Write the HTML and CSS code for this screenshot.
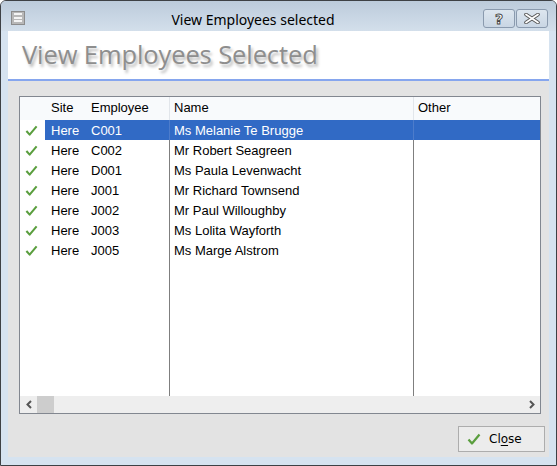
FILE: index.html
```html
<!DOCTYPE html>
<html>
<head>
<meta charset="utf-8">
<link rel="stylesheet" href="styles.css">
</head>
<body>
<div class="window">
  <div class="titlebar">
    <div class="sysicon"><span></span><span></span><span></span></div>
    <div class="title">View Employees selected</div>
    <div class="capbtns">
      <div class="capbtn help">?</div>
      <div class="capbtn close">
        <svg width="18" height="11" viewBox="0 0 18 11"><path d="M3 1.5 L15 9.5 M15 1.5 L3 9.5" stroke="#555" stroke-width="3.6" stroke-linecap="round"/><path d="M3 1.5 L15 9.5 M15 1.5 L3 9.5" stroke="#fff" stroke-width="1.8" stroke-linecap="round"/></svg>
      </div>
    </div>
  </div>
  <div class="frame">
    <div class="client">
      <div class="header"><h1>View Employees Selected</h1></div>
      <div class="panel">
        <div class="grid">
          <div class="row head">
            <div class="c chk"></div>
            <div class="c">Site</div>
            <div class="c">Employee</div>
            <div class="c line">Name</div>
            <div class="c line">Other</div>
          </div>
          <div class="body">
            <div class="row sel">
              <div class="c chk"><svg class="tick" viewBox="0 0 14 14"><path d="M1.5 7.5 L5 11.5 L12.5 2.5" fill="none" stroke="#5a9e3e" stroke-width="2.2" stroke-linejoin="round"/></svg></div>
              <div class="c">Here</div><div class="c">C001</div><div class="c line">Ms Melanie Te Brugge</div><div class="c line"></div>
            </div>
            <div class="row">
              <div class="c chk"><svg class="tick" viewBox="0 0 14 14"><path d="M1.5 7.5 L5 11.5 L12.5 2.5" fill="none" stroke="#5a9e3e" stroke-width="2.2" stroke-linejoin="round"/></svg></div>
              <div class="c">Here</div><div class="c">C002</div><div class="c line">Mr Robert Seagreen</div><div class="c line"></div>
            </div>
            <div class="row">
              <div class="c chk"><svg class="tick" viewBox="0 0 14 14"><path d="M1.5 7.5 L5 11.5 L12.5 2.5" fill="none" stroke="#5a9e3e" stroke-width="2.2" stroke-linejoin="round"/></svg></div>
              <div class="c">Here</div><div class="c">D001</div><div class="c line">Ms Paula Levenwacht</div><div class="c line"></div>
            </div>
            <div class="row">
              <div class="c chk"><svg class="tick" viewBox="0 0 14 14"><path d="M1.5 7.5 L5 11.5 L12.5 2.5" fill="none" stroke="#5a9e3e" stroke-width="2.2" stroke-linejoin="round"/></svg></div>
              <div class="c">Here</div><div class="c">J001</div><div class="c line">Mr Richard Townsend</div><div class="c line"></div>
            </div>
            <div class="row">
              <div class="c chk"><svg class="tick" viewBox="0 0 14 14"><path d="M1.5 7.5 L5 11.5 L12.5 2.5" fill="none" stroke="#5a9e3e" stroke-width="2.2" stroke-linejoin="round"/></svg></div>
              <div class="c">Here</div><div class="c">J002</div><div class="c line">Mr Paul Willoughby</div><div class="c line"></div>
            </div>
            <div class="row">
              <div class="c chk"><svg class="tick" viewBox="0 0 14 14"><path d="M1.5 7.5 L5 11.5 L12.5 2.5" fill="none" stroke="#5a9e3e" stroke-width="2.2" stroke-linejoin="round"/></svg></div>
              <div class="c">Here</div><div class="c">J003</div><div class="c line">Ms Lolita Wayforth</div><div class="c line"></div>
            </div>
            <div class="row">
              <div class="c chk"><svg class="tick" viewBox="0 0 14 14"><path d="M1.5 7.5 L5 11.5 L12.5 2.5" fill="none" stroke="#5a9e3e" stroke-width="2.2" stroke-linejoin="round"/></svg></div>
              <div class="c">Here</div><div class="c">J005</div><div class="c line">Ms Marge Alstrom</div><div class="c line"></div>
            </div>
            <div class="row filler">
              <div class="c chk"></div><div class="c"></div><div class="c"></div><div class="c line"></div><div class="c line"></div>
            </div>
          </div>
          <div class="hscroll">
            <div class="arrow"><svg width="8" height="9" viewBox="0 0 8 9"><path d="M6 1 L2.5 4.5 L6 8" fill="none" stroke="#555" stroke-width="2"/></svg></div>
            <div class="thumb"></div>
            <div class="track"></div>
            <div class="arrow"><svg width="8" height="9" viewBox="0 0 8 9"><path d="M2 1 L5.5 4.5 L2 8" fill="none" stroke="#555" stroke-width="2"/></svg></div>
          </div>
        </div>
        <div class="footer">
          <div class="btn">
            <svg class="btntick" viewBox="0 0 14 14"><path d="M1.5 7.5 L5 11.5 L12.5 2.5" fill="none" stroke="#5a9e3e" stroke-width="2.2" stroke-linejoin="round"/></svg>
            <span>Cl<u>o</u>se</span>
          </div>
        </div>
      </div>
    </div>
  </div>
</div>
</body>
</html>
```
FILE: styles.css
```css
html, body { margin: 0; padding: 0; background: #ffffff; }
.window {
  width: 557px; height: 466px; box-sizing: border-box;
  border: 1px solid #3e4145; border-radius: 6px 6px 0 0;
  background: #d6e3f0;
  display: flex; flex-direction: column;
  font-family: "Liberation Sans", Arial, sans-serif;
}
.titlebar {
  height: 30px; flex: none;
  background: linear-gradient(#bccbdb, #d3dfeb);
  border-radius: 5px 5px 0 0;
  display: flex; align-items: center;
  padding: 0 8px 0 10px;
}
.sysicon {
  width: 14px; height: 14px; box-sizing: border-box;
  border: 1px solid #8c8c8c; background: #b8b8b8;
  display: flex; flex-direction: column; justify-content: space-evenly; padding: 0 2px;
  margin-top: 3px;
}
.sysicon span { display: block; height: 2px; background: #f4f4f4; }
.title {
  flex: 1; text-align: center;
  font-family: "Noto Sans", "Open Sans", sans-serif; font-size: 14px; color: #000;
  padding-right: 2px; margin-top: 7px;
}
.capbtns { display: flex; gap: 1px; align-self: flex-start; margin-top: 8px; }
.capbtn {
  width: 32px; height: 19px; box-sizing: border-box;
  border: 1px solid #8a9aae; border-radius: 3px;
  background: linear-gradient(#dde6ef, #c9d6e4);
  display: flex; align-items: center; justify-content: center;
}
.capbtn.help {
  font-family: "DejaVu Sans", sans-serif; font-weight: bold; font-size: 14px;
  color: #fff; -webkit-text-stroke: 0.9px #444;
}
.frame { flex: 1; padding: 0 7px 8px 7px; display: flex; }
.client { flex: 1; display: flex; flex-direction: column; background: #e3e3e3; }
.header {
  height: 48px; background: #fff; border-bottom: 2px solid #86a6ee;
  display: flex; align-items: center; padding-left: 14px;
}
.header h1 {
  margin: 0; font-family: "Open Sans", "Noto Sans", sans-serif;
  font-weight: normal; font-size: 25.5px; color: #8e8e8e;
  text-shadow: 2px 3px 3px rgba(0,0,0,0.28);
  margin-top: -3px; letter-spacing: -0.1px;
}
.panel { flex: 1; display: flex; flex-direction: column; padding: 15px 4px 5px 11px; }
.grid {
  width: 522px; height: 318px; box-sizing: border-box;
  border: 1px solid #828790; background: #fff;
  display: flex; flex-direction: column;
}
.row {
  display: grid; grid-template-columns: 25px 40px 84px 244px 1fr;
  height: 20px; font-size: 13px; color: #000;
}
.c { display: flex; align-items: center; padding-left: 6px; white-space: nowrap; overflow: hidden; }
.c.chk { padding-left: 5px; }
.c.line { border-left: 1px solid #7f7f7f; padding-left: 4px; }
.row.head { height: 23px; background: #f8fafc; }
.row.head .c { padding-bottom: 3px; }
.row.head .c.line { border-left-color: #e2e6eb; }
.body { flex: 1; display: flex; flex-direction: column; }
.row.sel .c { background: #316ac5; color: #fff; }
.row.sel .c.chk { background: #fff; }
.row.sel .c.line { border-left-color: #4d7ccb; }
.row.filler { flex: 1; }
.tick { width: 13px; height: 13px; }
.hscroll { height: 17px; background: #eeeeee; display: flex; align-items: stretch; }
.arrow { width: 17px; display: flex; align-items: center; justify-content: center; }
.thumb { width: 17px; background: #cdcdcd; }
.track { flex: 1; }
.footer { flex: 1; display: flex; justify-content: flex-end; align-items: flex-end; }
.btn {
  width: 87px; height: 26px; box-sizing: border-box;
  border: 1px solid #adadad; background: #ececec;
  display: flex; align-items: center; padding-left: 8px; gap: 8px;
  font-family: "DejaVu Sans", sans-serif; font-size: 12px; color: #000;
}
.btn u { text-decoration-thickness: 1px; text-underline-offset: 2px; }
.btntick { width: 14px; height: 14px; }
```
